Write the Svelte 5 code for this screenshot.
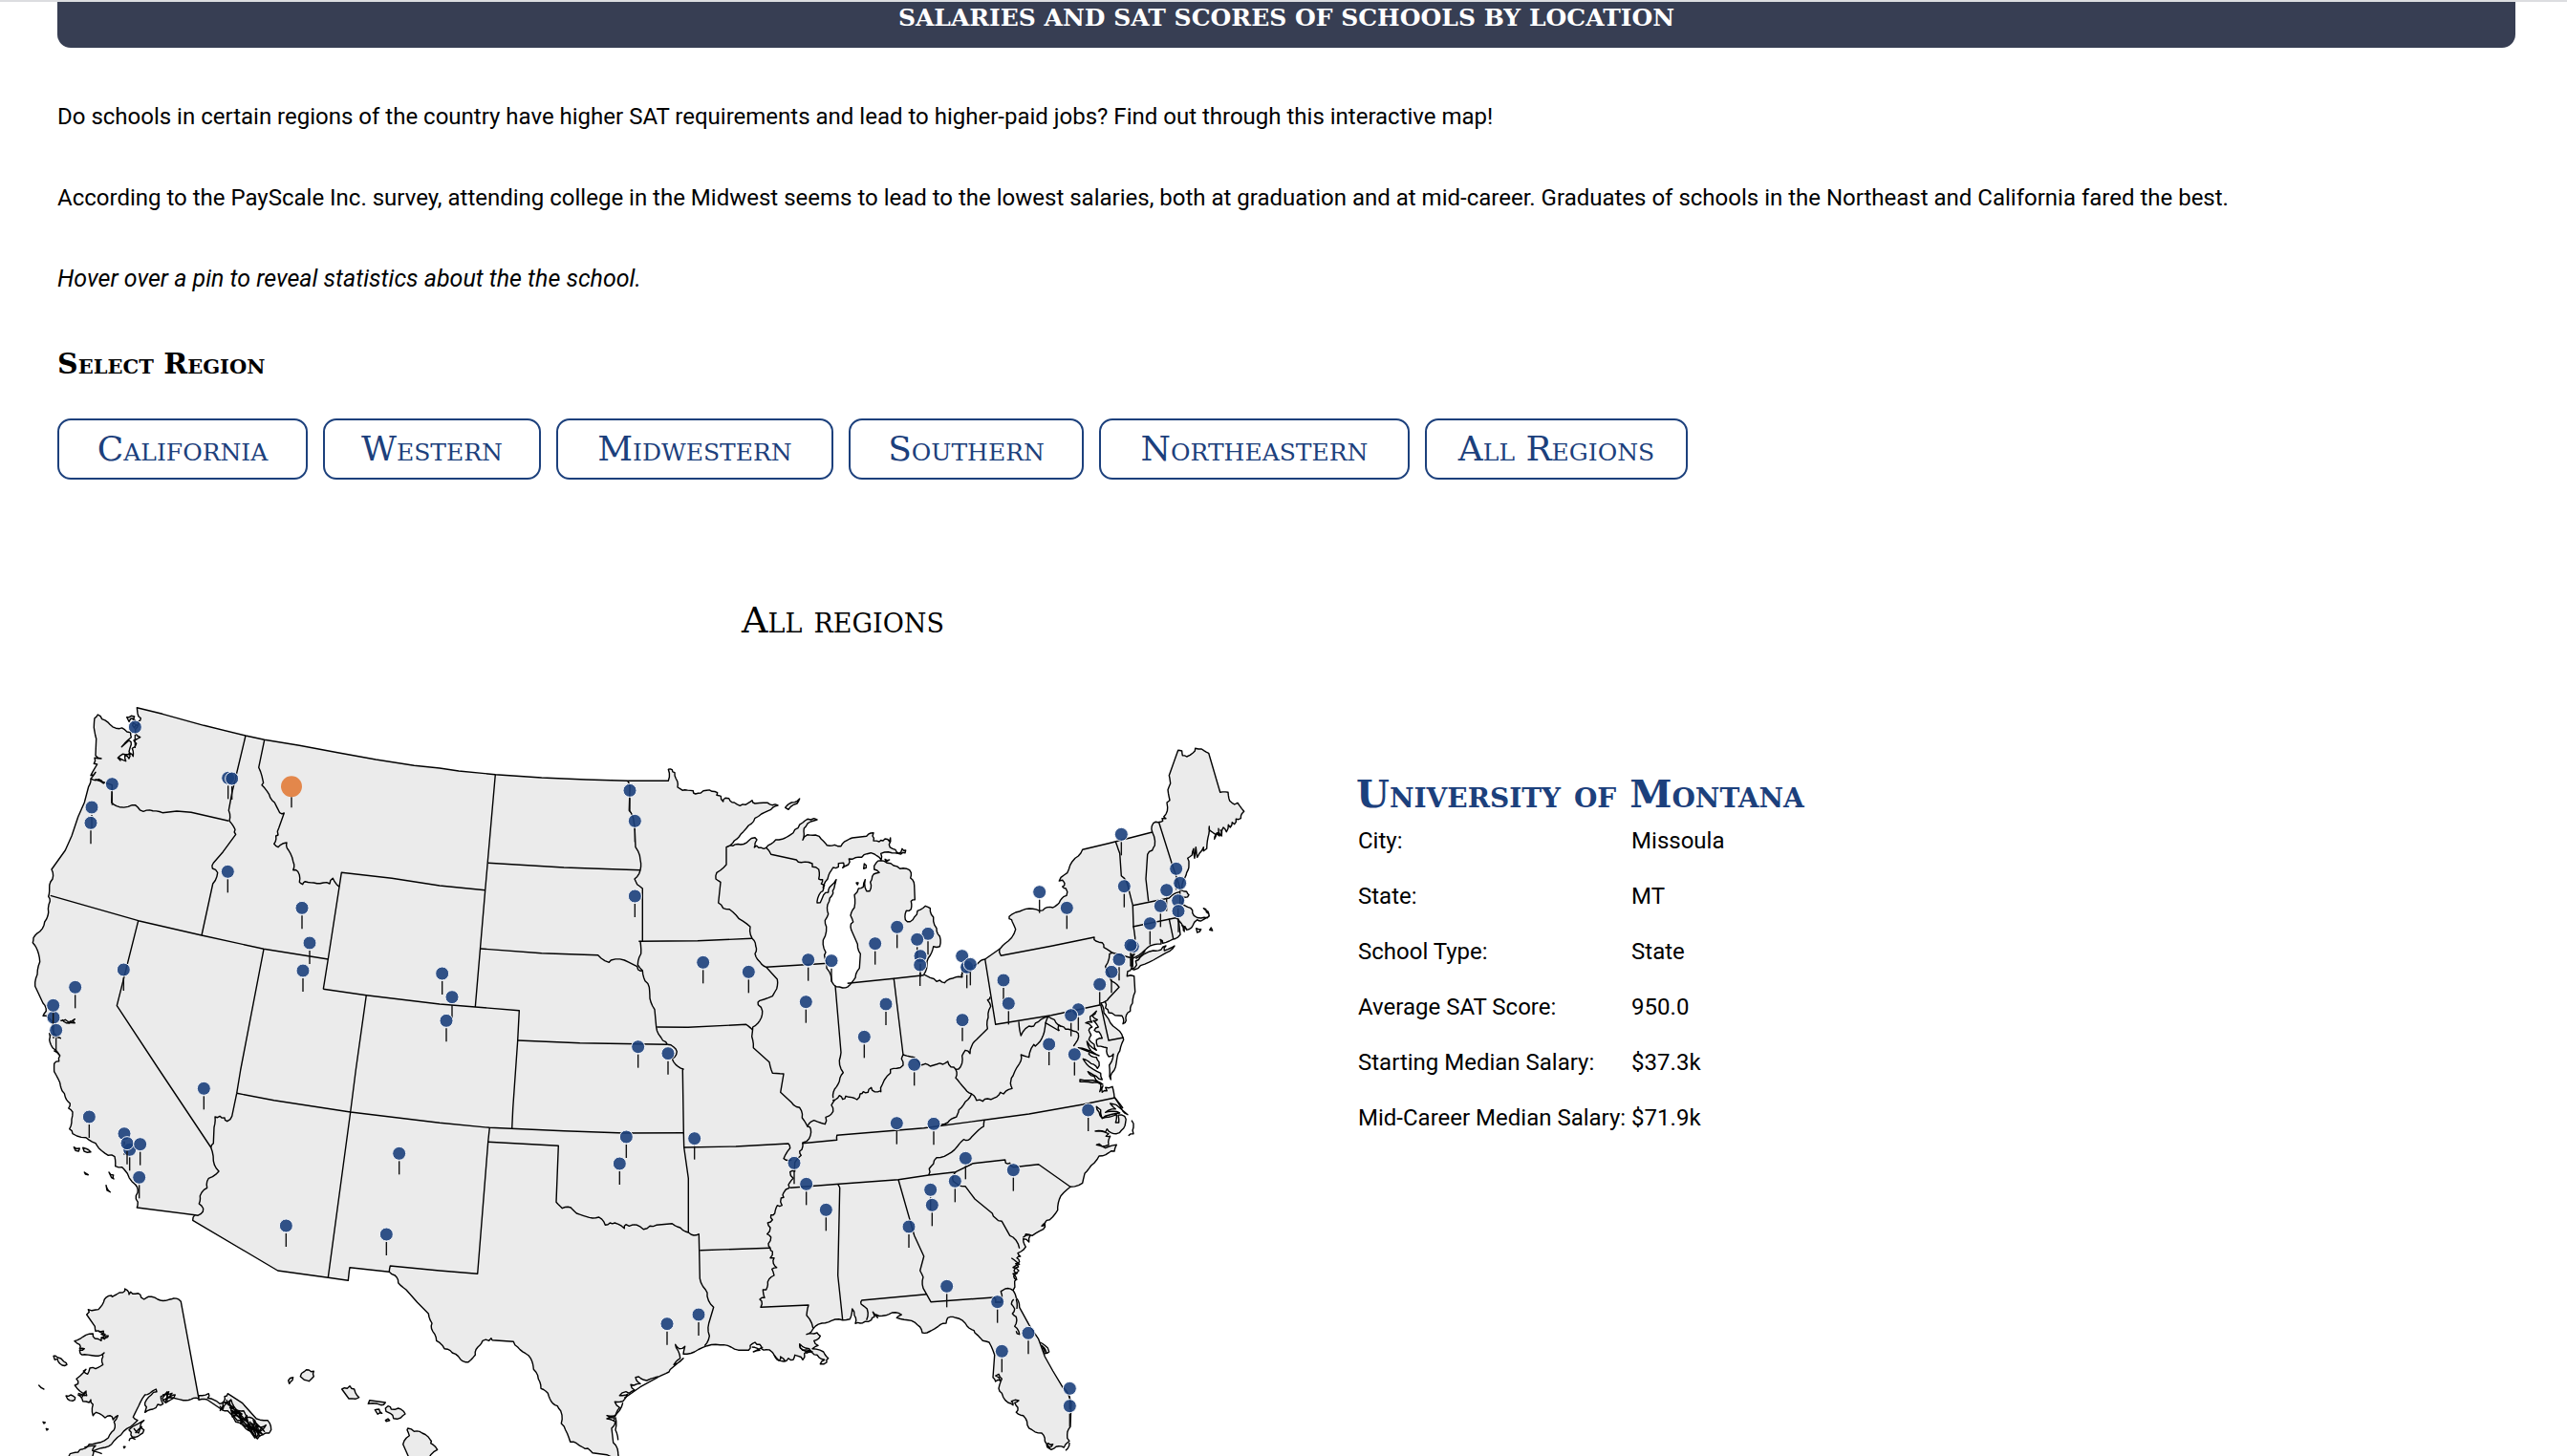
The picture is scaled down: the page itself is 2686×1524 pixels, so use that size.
<script>
  // Outlines are digitised in tiles, three tile units to one map unit.
  const origins = {
    A: [0, 720], B: [0, 1100], C: [440, 760], D: [440, 1120],
    E: [820, 780], F: [1060, 760], G: [1060, 980], H: [800, 1130],
  };

  // "A 1,2 3,4 C 5,6" -> list of map points
  function points(text) {
    let origin = [0, 0];
    const out = [];
    for (const token of text.trim().split(/\s+/)) {
      if (origins[token]) { origin = origins[token]; continue; }
      const [x, y] = token.split(',').map(Number);
      out.push([origin[0] + x / 3, origin[1] + y / 3]);
    }
    return out;
  }

  // Short segments belong to coasts and rivers and get a little extra wobble;
  // long ones are surveyed borders and stay straight.
  function trace(text, closed = false) {
    const pts = points(text);
    let d = `M${pts[0][0].toFixed(1)} ${pts[0][1].toFixed(1)}`;
    for (let i = 1; i < pts.length; i++) {
      const [ax, ay] = pts[i - 1];
      const [bx, by] = pts[i];
      const len = Math.hypot(bx - ax, by - ay);
      if (len > 4 && len < 15) {
        const n = len > 8 ? 3 : 2;
        for (let k = 1; k < n; k++) {
          const t = k / n;
          const s = Math.sin(ax * 12.9 + ay * 78.2 + k * 37.7) * 1.1;
          const px = ax + (bx - ax) * t - ((by - ay) / len) * s;
          const py = ay + (by - ay) * t + ((bx - ax) / len) * s;
          d += `L${px.toFixed(1)} ${py.toFixed(1)}`;
        }
      }
      d += `L${bx.toFixed(1)} ${by.toFixed(1)}`;
    }
    return closed ? d + 'Z' : d;
  }

  const mainland = `
    A 430,62 510,82 640,118 771,150 830,163 940,181 1060,203 1180,225 1300,244
    C 60,132 120,141 235,152 380,162 520,168 650,172 778,172 778,136 790,137 798,146 802,165 807,192 815,197 830,200 856,203 863,213 880,210 898,202 915,205 932,209 930,217 943,220 950,237 957,226 968,227 972,235 985,240 1003,250 1020,247 1041,233 1050,243 1090,241 1104,248 1122,249 1100,262 1070,276 1050,289 1030,312 1005,340 985,360 965,378 980,376 1005,372 1030,360 1050,350 1056,357 1050,368 1048,381 1055,376 1070,382 1085,382 1100,370 1115,357 1145,351 1170,335 1185,320 1200,303 1215,292 1235,290 1245,294 1225,300 1210,315 1203,330 1200,358
    E 75,281 100,282 118,295 136,314 160,313 180,317 200,298 215,291 260,286 282,275 279,285 282,300 300,303 312,300 318,294 332,302 335,291 331,312 342,325 355,336 368,336 372,325 383,330 381,338 368,342 340,338 305,340 306,360 300,352 285,342 262,341 245,352 215,358 205,357 203,375 185,385 188,370 172,371 172,382 155,384 145,400 138,420 125,450 116,462 105,490 105,495 115,494 125,470 140,462 150,440 165,422 158,450 155,465 145,480 138,500 140,530 130,550 134,570 124,612 132,650 130,670 135,700 150,735 165,758 185,762 208,752 225,730 238,700 241,655 232,625 212,580 210,570 218,555 210,535 222,510 222,470 235,450 250,445 256,422 260,458 270,458 272,430 278,412 290,402 300,400 284,390 290,370 305,362 325,370 345,378 365,388 395,392 400,400 398,417 410,440 412,485 400,490 400,515 385,520 382,548 397,554 410,540 420,520 445,505 460,512 470,540 480,575 490,600 490,632 470,632 460,660 450,690 440,720 460,730 480,742 490,738 505,746 530,732 560,728 562,715 590,695 610,685 632,672 680,638 705,615 728,578 718,555 708,545 708,538
    F 20,582 30,578 62,574 83,580 100,572 125,570 145,555 160,535 168,532 166,510 155,504 162,494 155,484 145,486 160,468 175,450 195,415 218,388 300,368 437,333 440,305 455,302 470,298 468,290 480,290 473,285 485,255 483,240 492,233 486,200 494,180 490,155 518,76 530,78 532,92 545,96 565,84 572,70 592,72 614,85 650,208 675,208 680,235 695,246 705,241 725,268 715,290 700,292 695,308 688,302 682,318 676,310 670,332 660,318 655,345 645,322 648,345 640,335 632,355 636,340 615,325 616,315 612,350 608,385 598,392 598,380 585,400 578,412 574,380 570,415 567,385 562,405 548,415 552,435 545,460 540,475 530,510 525,515 545,520 552,530 540,538 532,535 530,555 548,568 563,578 568,595 590,603 610,602 615,590 605,575 598,572 612,582 616,597 590,612 578,608 565,625 545,640 530,625 538,645 520,610 525,655 500,670 470,682 462,670 465,684 430,690 412,705 385,725 372,735
    G 372,100 360,110 358,125 380,125 383,175 375,210 368,235 360,240 355,265 345,275 342,250 320,248 300,240 290,225 289,205 275,210 285,240 300,260 325,290 345,318 347,325 335,360 328,375 322,410 310,430 307,450 303,440 302,405 315,370 300,378 295,350 285,348 265,345 262,325 280,320 270,300 255,295 268,285 252,265 265,262 248,250 262,235 242,252 248,270 228,272 248,285 238,295 245,310 238,325 255,340 262,358 232,330 245,360 270,375 205,350 240,360 238,370 262,380 270,395 265,415 245,400 220,385 240,410 275,430 280,450 262,440 235,425 255,440 270,458 282,465 250,452 210,450 210,457 250,460 275,465 272,488 282,470 280,490 295,485 290,475 312,472 318,505 340,540 360,560 325,530 305,525 322,542 290,553 315,550 335,555 300,562 280,572 275,545 262,535 270,552 280,572 300,568 325,560 322,585 332,585 330,562 350,565 353,585 340,610 325,620 300,612 295,605 290,615 258,612 300,620 292,628 305,628 300,655 280,660 270,652 262,655 290,665 325,655 318,675 300,680 270,690 245,720 225,745 218,775
    H 998,325 960,337 930,365 920,400 920,410 895,440 880,450 870,460 880,452 875,470 840,490 820,485 812,495 835,488 830,510 812,500 820,525 805,540 795,545 803,555 792,560 800,572 788,578 797,588 783,600 793,608 782,618 790,628 785,640 780,662 790,685 800,715 830,770 860,815 880,870 905,915 935,965 958,1000 962,1030 960,1090 950,1115 957,1135 945,1145 940,1155 915,1153 900,1162 888,1155 890,1142 905,1145 895,1155 880,1135 870,1110 840,1100 825,1085 812,1055 790,1045 795,1030 785,1015 798,1008 775,1010 780,1022 765,1015 745,985 735,970 745,940 735,925 725,930 740,945 725,948 717,935 722,865 705,825 685,820 660,795 650,785 630,765 600,748 575,748 570,765 545,775 510,795 495,795 480,770 450,755 415,748 430,738 400,732 370,742 350,738 355,748 340,730 345,745 335,755 315,760 300,765 285,766 282,740 275,720 268,752 245,755 210,757 180,765 152,783 132,800 155,798 165,795 175,805 155,820 168,835 150,845 185,855 200,875 195,888 175,893 188,880 165,865 150,858 140,845 110,830 112,842 140,855 125,860 120,880 105,868 95,865 90,880 75,875 60,885 40,880 30,865
    D 1103,885 1085,878 1070,875 1065,862 1050,855 1035,865 1030,880 1010,880 975,870 940,863 900,866 860,885 825,892 830,868 812,875 800,862 808,880 815,905 795,925 825,905 790,935 780,948 750,962 710,975 685,963 675,965 690,985 670,990 660,988 672,1005 655,1015 645,1010 625,1022 650,1018 635,1040 610,1042 625,1060 612,1085 585,1085 605,1092 585,1095 612,1105 600,1125 605,1170 620,1200 622,1215 600,1215 585,1208 540,1202 525,1188 510,1185 490,1172 470,1168 455,1130 442,1110 440,1070 430,1055 410,1040 400,1015 378,1000 370,970 355,940 350,915 330,890 305,870 292,853 225,848 222,842 215,850 195,850 180,870 172,895 150,917 125,908 100,888 75,875 50,850
    B 1358,880 1356,855 1345,825 1310,790 1275,750 1250,728 1240,705 1222,694 1098,680 1093,721 1030,712 872,690 605,532 612,515 430,492 432,485 427,465 432,445 425,420 400,385 383,365 362,362 360,332 340,328 310,305 300,290 270,272 228,260 218,245 225,215 228,192 215,180 220,165 205,145 195,125 188,100 170,65 170,40 185,32 188,15 170,0
    A 188,1155 165,1130 155,1105 155,1085 190,1100 170,1085 165,1050 145,1030 135,1030 145,1015 135,990 110,937 117,900 125,860 118,825 103,800 105,785 125,765 140,735 152,705 157,670 152,655 155,630 165,600 162,570 205,510 225,465 245,405 265,360 278,310 285,285 300,265 285,275 305,240 295,238 297,220 318,222 300,212 302,160 295,125 297,95 307,84 320,98 345,115 375,128 390,130 410,140 412,155 382,185 405,165 412,178 405,200 410,208 385,208 370,220 378,228 372,218 395,230 392,212 405,222 405,205 418,215 415,190 428,175 420,165 440,155 430,150 425,130 435,105 442,95 432,80`;

  const shapes = [
    // Isle Royale, Long Island, Nantucket, Martha's Vineyard
    'C 1145,256 1165,240 1190,228 1182,243 1155,262',
    'G 385,78 400,65 440,45 465,42 480,30 475,45 507,30 480,52 440,75 400,92 380,105 372,103 388,90',
    'F 575,635 590,638 578,648', 'F 617,640 622,633 626,642',
    // Lake Michigan islands
    'E 253,372 259,385 251,388', 'E 228,432 234,432 232,438', 'E 318,358 332,360 322,366',
    // Channel Islands
    'B 232,302 250,306 247,315 237,313', 'B 260,304 285,317 264,315', 'B 265,381 277,389 268,387',
    'B 342,381 356,390 357,402 350,398', 'B 333,422 346,443 336,438',
    // Puget Sound islands
    'A 398,92 412,88 422,90 418,100 425,103 410,97 405,106', 'A 418,110 432,118 422,126 416,118',
    // Alaska
    'B 568,787 545,777 530,781 520,784 495,780 465,772 452,780 440,765 425,763 410,757 405,765 400,752 392,747 386,758 365,765 352,772 350,768 328,780 315,805 300,813 277,812 280,820 272,828 298,865 300,880 315,882 325,880 318,890 340,895 328,905 318,900 318,910 298,903 292,888 260,898 234,911 250,922 250,935 265,935 250,940 252,950 265,953 300,958 327,948 323,960 323,985 300,998 282,996 275,1015 262,1005 270,1000 240,1030 245,1045 235,1050 260,1075 270,1068 272,1082 245,1080 260,1100 280,1104 285,1095 292,1110 292,1145 302,1135 330,1152 345,1145 355,1158 370,1145 358,1165 358,1190 340,1215 300,1232 280,1235 260,1250 245,1260 220,1265 215,1275 290,1275 295,1255 330,1245 350,1235 380,1205 410,1180 432,1160 418,1150 435,1115 455,1080 470,1075 490,1062 492,1070 475,1080 455,1105 460,1118 455,1135 480,1125 495,1110 512,1108 505,1085 525,1070 520,1100 535,1085 550,1080 545,1090 575,1097 600,1094 624,1092',
    'B 624,1082 655,1076 652,1090 690,1108 703,1100 705,1085 715,1076 760,1105 805,1155 840,1160 851,1190 845,1200 825,1205 808,1218 790,1195 765,1178 740,1165 715,1130 690,1122 650,1095 624,1096',
    'B 168,958 180,962 200,975 208,980 210,985 195,987 180,967 172,970',
    'B 207,1083 222,1080 236,1088 228,1099 212,1093', 'B 122,1050 138,1062 130,1058',
    'B 135,1165 142,1167 138,1170', 'B 145,1186 151,1188 147,1191',
    'B 405,1190 425,1175 452,1160 440,1180 452,1190 440,1205 415,1212 412,1198', 'B 388,1243 393,1243 390,1247',
    // Hawaii
    'B 905,1035 920,1025 918,1034 908,1045', 'B 943,1022 955,1007 970,1002 985,1006 985,1022 970,1037 955,1033',
    'B 1073,1062 1090,1060 1098,1052 1112,1062 1127,1088 1115,1093 1095,1092', 'B 1160,1097 1210,1104 1196,1112 1156,1108',
    'B 1177,1127 1190,1125 1199,1138 1186,1141', 'B 1210,1122 1218,1115 1228,1125 1250,1122 1272,1140 1258,1152 1235,1154 1225,1138 1212,1132',
    'B 1210,1160 1218,1155 1223,1160 1212,1163',
    'B 1280,1185 1300,1195 1325,1200 1350,1220 1352,1232 1373,1252 1345,1280 1285,1280 1265,1235 1285,1208 1278,1190',
  ];

  const borders = [
    'A 285,285 300,290 310,287 325,300 300,288 352,305 350,360 375,374 415,368 432,374 450,388 480,386 510,392 555,387 600,391 718,418',
    'A 771,150 728,330 718,385 720,418 738,445 740,460 700,515 670,550 667,567 683,580 668,615 633,777',
    'A 830,163 812,250 825,290 822,305 845,335 862,360 878,392 892,393 875,440 873,462 866,465 860,490 873,500 900,486 906,510 920,545 920,572 935,577 940,610 950,617 958,608 985,612 1015,612 1035,615 1045,598 1065,625',
    'A 1015,946 1030,852 1065,625 1072,580 1230,598 1380,621 C 203,515',
    'A 1015,946 1150,965 1380,993 C 172,882 310,893 305,987 290,1200 D 287,184',
    'A 158,652 434,731 633,777 828,820 1030,852',
    'A 434,731 367,998 500,1200 B 662,303 670,290 672,240 675,207 690,205 705,210 713,221 728,205 743,133',
    'A 828,820 755,1200 B 743,133', 'A 1150,965 1117,1200 B 1100,192 1030,712',
    'B 743,133 860,155 1100,192 1380,226 D 217,181 450,191 640,198 826,197',
    'B 662,303 670,345 687,378 655,400 650,430 628,455 625,480 638,495 630,512 612,515',
    'B 1222,694 1225,675 1380,690 D 179,640 212,226 217,181',
    'D 212,226 433,238 426,415 445,434 472,432 490,450 520,460 540,465 560,462 580,487 595,480 610,480 640,497 645,485 655,490 680,487 700,500 720,490 740,487 790,482 815,495 841,510 850,517 874,515 877,655 895,690 900,710 920,745 905,795 907,835 892,866',
    'D 841,510 841,340 827,243 826,197 823,0 C 825,1077 810,1070 790,1045 805,1022 795,1008 775,1000',
    'D 827,243 990,240 1155,231 1160,245 1140,278 1165,283', 'D 877,566 1098,559',
    'C 1041,667 1052,690 1050,715 1065,740 1085,757 1120,795 1118,825 1105,848 1065,862 1060,875 1073,895 1065,925 1043,945 1040,975 1045,1010 1095,1055 1105,1090 1140,1092 1130,1150 1165,1182 1190,1198 D 1198,150 1215,178 1225,185 1220,215 1200,228 1197,250 1190,255 1195,268 1175,290 1175,318 1160,320 1170,340 1155,360 1158,370 1140,385 1140,400 1132,402 1135,425 1120,425 1112,450 1100,455 1105,470 1090,480 1098,495 1088,515 1100,525 1092,545 1098,559 1105,570 1098,590 1110,590 1108,608 1118,620 1103,625 1110,645 1090,665 1085,690 1075,690 1080,715 1065,720 1072,735 1068,745 1218,738 1212,770 1232,810',
    'D 1215,178 1235,158 1270,170 1272,148 1295,130 1290,110 1300,95 H 215,65 235,50 245,62 255,52 265,55 290,63 300,45 310,38 325,40 335,25 345,38 365,35 E 305,1088 310,1065 335,1030 335,1018 355,1015 375,1005 370,985 375,972 410,980 430,1005 445,1000 460,1008 480,1002 500,1002 515,993 525,1010 540,1018 555,1010 560,975 570,958 585,968 590,945 605,925 640,890 642,855 650,820 640,800 648,790',
    'E 632,672 665,877 840,848 G 275,215', 'E 738,868 745,912 770,882 785,882 800,868 G 80,268 110,252 130,262 150,282 165,292 190,298 205,305 203,325 190,345',
    'G 145,297 102,272 98,300 85,330 70,345 65,340 50,380 25,372 20,400 0,438 E 715,1045 712,1062 717,1078 690,1095 H 740,40 720,58 700,60 685,68 665,65 650,45 630,30 605,0 E 540,1045 540,1018',
    'G 110,252 102,272', 'G 145,297 143,280 150,282',
    'H 650,45 630,70 610,95 605,110 595,120 575,135 555,142', 'H 118,200 227,190 227,175 500,152 690,127 830,108 1000,78 1100,57',
    'H 690,127 688,147 665,165 650,180 640,190 625,188 605,210 575,235 540,245 530,265 517,280 515,300',
    'H 80,340 235,328 420,314 515,300 600,290 655,263 755,252 757,262 770,262 780,275 860,266 960,337',
    'H 230,328 236,340 230,615 245,755', 'H 420,314 470,490 500,555 488,600 498,620 498,655 522,698 720,684 725,700 742,700 742,665 755,657 780,662',
    'H 508,674 305,693 303,705 322,720 320,755', 'H 600,290 590,310 600,325 630,335 660,375 715,420 725,435 745,445 770,490 780,495 800,530',
    'E 200,748 346,733 375,972', 'E 346,733 440,722', 'E 162,755 180,965 175,990 187,1028 175,1055 160,1080 155,1108',
    'C 1085,757 1280,745', 'C 965,378 960,380 960,435 930,460 927,480 942,490 935,555 950,572 970,575 1000,605 1035,630 1041,667',
    'C 1085,382 1100,403 1180,420 1195,428 1230,432 1230,442 1250,450 1250,480 1262,482 1258,495 1268,500 1265,512',
    'C 685,676 870,674 1041,667', 'C 650,172 657,200 655,265 668,290 673,330 675,380 690,420 690,452 672,480 680,497 697,510 697,676',
    'C 212,430 450,444 690,452', 'C 235,152 203,515 172,882',
    'C 189,699 380,713 557,719 592,742 598,735 640,735 680,755 683,765 697,768',
    'C 690,676 692,715 682,750 697,768 705,800 718,820 720,855 735,890 740,945 755,978 770,992 775,1000',
    'C 742,945 840,946 1022,937 1043,955', 'C 305,987 500,995 775,1000',
    'E 678,638 682,661 840,631 F 255,663 260,675 280,680 285,695 312,712', 'G 312,52 303,55 290,95 308,140 333,160 300,195 289,205', 'G 312,52 372,68',
    'G 275,215 300,327 347,318', 'F 322,363 335,400 340,470 360,500 376,563 378,630 383,665 380,720',
    'F 437,333 445,375 437,390 422,403 417,480 425,550', 'F 458,303 498,430 515,480 525,515',
    'F 376,563 490,540 525,520', 'F 376,630 510,602 520,615', 'F 490,605 503,668',
    // Barrier islands and sounds
    'G 372,578 378,600 378,620 362,626', 'G 318,505 345,540', 'D 612,1090 612,1130 620,1162', 'D 635,1045 615,1080 608,1100', 'D 745,965 690,995 640,1030',
    'H 782,690 775,705 785,720 778,735 790,745 785,775 800,800 790,790', 'H 790,690 792,720', 'H 865,825 880,835 893,855 880,860 870,835 885,858',
    'H 957,1140 945,1165', 'G 375,55 375,95', 'G 370,55 370,95', 'G 385,70 415,45', 'G 368,75 378,60',
    'D 1190,862 1200,880 1230,885 1210,890', 'D 1040,870 1065,880 1045,885 1075,870', 'D 1110,895 1125,912 1130,900 1145,915',
    'A 190,1045 205,1042 235,1052 220,1047 235,1040 218,1053 195,1042',
    'H 775,560 800,580 780,590 798,600 780,610 792,630',
    'F 530,625 535,642 540,630 545,640', 'F 632,350 645,335 655,342 650,325',
    // Alaskan inlets
    'B 510,1080 540,1075 515,1095 545,1090 520,1105 510,1090 530,1070 525,1100', 'B 245,1075 265,1082 268,1070 255,1090', 'B 265,1245 300,1240 290,1255 320,1265',
    'B 420,1185 435,1200 445,1180 425,1200', 'B 310,880 330,890 320,900 340,898', 'B 405,1225 415,1215 425,1220',
    'B 710,1095 735,1120 715,1110 745,1140 725,1128 760,1160 740,1125 775,1165 750,1150 790,1190 770,1150 800,1200 785,1165 815,1210 795,1160 830,1195 805,1175 825,1205 780,1175 800,1215 765,1165 745,1160 730,1130 760,1140 720,1120',
    'B 705,1105 725,1095 740,1125 765,1130 775,1150 800,1160 810,1180 835,1175 815,1195 790,1170 770,1180 755,1150 735,1145',
    'B 720,1100 730,1150 750,1130 755,1170 775,1145 780,1190 795,1170 805,1215 820,1185', 'B 690,1115 700,1125 715,1105 700,1105 690,1130',
  ];

  const schools = `
    A 424,123 352,302 288,375 285,424 716,283 728,285 715,577 948,691 972,801 951,888 388,885 236,940 168,1035 167,997 176,1075
    B 640,118 280,207 390,260 407,310 399,290 440,293 437,397 898,549 1253,322 1213,576
    C 68,777 99,851 81,925 657,202 673,298 673,534 887,742 1030,772 1217,734 1290,737 1210,866 683,1007 777,1028
    D 646,210 625,294 860,215 1173,292 1211,358 1273,439 774,797 873,768
    E 356,571 287,623 453,592 419,610 429,662 428,690 321,813 253,916 410,1003 560,662 575,697 586,688 561,863 690,738 706,811 803,461
    F 169,571 340,340 349,503 512,448 524,493 482,515 518,548 519,581 463,565 430,620 376,692 369,688
    G 333,73 309,112 272,151 205,230 182,248 113,339 193,371 236,546
    H 415,137 531,139 631,247 598,319 781,284 521,346 526,394 453,462 572,649 731,698 828,796 745,853 958,970 958,1025`;

  const pins = points(schools);
  const active = points('A 915,310')[0];

  const regions = ['California', 'Western', 'Midwestern', 'Southern', 'Northeastern', 'All Regions'];
  const facts = [
    ['City:', 'Missoula'],
    ['State:', 'MT'],
    ['School Type:', 'State'],
    ['Average SAT Score:', '950.0'],
    ['Starting Median Salary:', '$37.3k'],
    ['Mid-Career Median Salary:', '$71.9k'],
  ];
</script>

<main>
  <section class="intro">
    <h1>SALARIES AND SAT SCORES OF SCHOOLS BY LOCATION</h1>
    <p>Do schools in certain regions of the country have higher SAT requirements and lead to higher-paid jobs? Find out through this interactive map!</p>
    <p>According to the PayScale Inc. survey, attending college in the Midwest seems to lead to the lowest salaries, both at graduation and at mid-career. Graduates of schools in the Northeast and California fared the best.</p>
    <p class="hint">Hover over a pin to reveal statistics about the the school.</p>
    <h2 class="select">Select Region</h2>
    <div class="regions">
      {#each regions as region}
        <button type="button">{region}</button>
      {/each}
    </div>
  </section>

  <h2 class="current">All regions</h2>

  <section class="explorer">
    <svg class="map" viewBox="0 720 1343 804" role="img" aria-label="Map of schools in the United States">
      <g class="land">
        <path d={trace(mainland, true)} />
        {#each shapes as shape}
          <path d={trace(shape, true)} />
        {/each}
      </g>
      <g class="borders">
        {#each borders as border}
          <path d={trace(border)} />
        {/each}
      </g>
      {#each pins as [x, y]}
        <g class="pin">
          <line x1={x} y1={y + 8} x2={x} y2={y + 22} />
          <circle cx={x} cy={y} r="7" />
        </g>
      {/each}
      <g class="pin active">
        <line x1={active[0]} y1={active[1] + 11} x2={active[0]} y2={active[1] + 22} />
        <circle cx={active[0]} cy={active[1]} r="11" />
      </g>
    </svg>

    <div class="details">
      <h2>University of Montana</h2>
      <table>
        <tbody>
          {#each facts as [label, value]}
            <tr><th scope="row">{label}</th><td>{value}</td></tr>
          {/each}
        </tbody>
      </table>
    </div>
  </section>
</main>

<style>
  :global(body) {
    margin: 0;
    background: #fff;
  }
  main {
    border-top: 2px solid #dcdde0;
    color: #000;
    font: 24px/28px Roboto, sans-serif;
    overflow: hidden;
  }
  .intro {
    padding: 0 54px 0 60px;
  }
  h1,
  h2,
  button {
    font-family: "DejaVu Serif", serif;
  }
  h1 {
    margin: 0 0 58px;
    padding-bottom: 14px;
    border-radius: 0 0 14px 14px;
    background: #373e53;
    color: #fff;
    font-size: 25px;
    font-weight: 700;
    line-height: 34px;
    text-align: center;
  }
  p {
    margin: 0 0 57px;
  }
  .hint {
    font-size: 25px;
    font-style: italic;
  }
  h2 {
    margin: 0;
    font-variant: small-caps;
    line-height: 40px;
  }
  .select {
    margin: 0 0 39px;
    font-size: 30px;
    font-weight: 700;
    line-height: 36px;
  }
  .regions {
    display: grid;
    grid-template-columns: 262px 228px 290px 246px 325px 275px;
    gap: 16px;
  }
  button {
    height: 64px;
    padding: 0;
    border: 2px solid #1c407c;
    border-radius: 14px;
    background: #fff;
    color: #1c407c;
    font-size: 36px;
    font-variant: small-caps;
    line-height: 40px;
  }
  .current {
    max-width: 1764px;
    margin: 127px 0 51px;
    font-size: 38px;
    font-weight: 400;
    text-align: center;
  }
  .explorer {
    display: grid;
    grid-template-columns: 1fr 1fr;
  }
  .map {
    display: block;
    width: 100%;
  }
  .land path {
    fill: #ebebeb;
    stroke: #000;
    stroke-width: 1.4;
    stroke-linejoin: round;
  }
  .borders path {
    fill: none;
    stroke: #000;
    stroke-width: 1.4;
    stroke-linejoin: round;
  }
  .pin line {
    stroke: #111;
    stroke-width: 1.4;
  }
  .pin circle {
    fill: #1c407c;
    fill-opacity: 0.9;
    stroke: #f4f6fa;
    stroke-width: 1;
  }
  .active circle {
    fill: #e3874b;
    fill-opacity: 1;
    stroke: none;
  }
  .details {
    padding: 91px 0 0 76px;
  }
  .details h2 {
    color: #1c407c;
    font-size: 40px;
    font-weight: 700;
  }
  table {
    border-collapse: collapse;
  }
  tr {
    height: 58px;
  }
  th,
  td {
    padding: 0 4px 0 2px;
    font-weight: 400;
    text-align: left;
  }
</style>
